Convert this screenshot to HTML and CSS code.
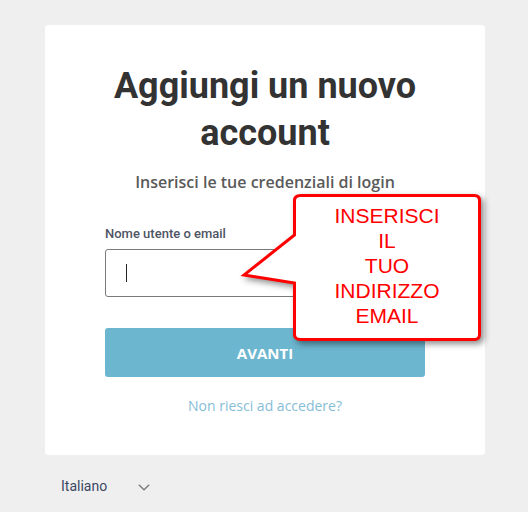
FILE: index.html
```html
<!DOCTYPE html>
<html lang="it">
<head>
<meta charset="utf-8">
<link rel="stylesheet" href="styles.css">
</head>
<body>
<div class="page">
  <main class="card">
    <h1 class="title">Aggiungi un nuovo account</h1>
    <p class="subtitle">Inserisci le tue credenziali di login</p>
    <form class="form">
      <label class="label">Nome utente o email</label>
      <div class="input"><span class="caret"></span></div>
      <button type="button" class="btn">AVANTI</button>
      <a class="link">Non riesci ad accedere?</a>
    </form>
  </main>
  <div class="lang">
    <span class="lang-name">Italiano</span>
    <svg class="chev" width="12" height="7" viewBox="0 0 12 7"><path d="M0.8 0.8 L6 5.8 L11.2 0.8" fill="none" stroke="#7a7a7a" stroke-width="1.3"/></svg>
  </div>
  <div class="callout">
    <svg class="callout-shape" width="252" height="160" viewBox="238 190 252 160">
      <path d="M300.5 195.5 H474.5 Q479.5 195.5 479.5 200.5 V334.5 Q479.5 339.5 474.5 339.5 H300.5 Q294.5 339.5 294.5 334.5 V283 L244 275 L294.5 235 V200.5 Q294.5 195.5 300.5 195.5 Z" fill="#fff" stroke="#ff0000" stroke-width="3" stroke-linejoin="miter"/>
    </svg>
    <div class="callout-text">INSERISCI<br>IL<br>TUO<br>INDIRIZZO<br>EMAIL</div>
  </div>
</div>
</body>
</html>
```
FILE: styles.css
```css
html, body {
  margin: 0;
  padding: 0;
  background: #efefef;
}
.page {
  position: relative;
  width: 528px;
  height: 512px;
  padding: 25px 0 0 45px;
  box-sizing: border-box;
}
.card {
  width: 440px;
  height: 430px;
  box-sizing: border-box;
  background: #fff;
  border-radius: 3px;
  padding: 38px 60px 0;
  display: flex;
  flex-direction: column;
  align-items: center;
}
.title {
  margin: 0;
  font-family: Roboto, "Liberation Sans", sans-serif;
  font-weight: 700;
  font-size: 36px;
  line-height: 47px;
  color: #333333;
  text-align: center;
}
.subtitle {
  margin: 14px 0 0;
  font-family: "Open Sans", "Liberation Sans", sans-serif;
  font-weight: 600;
  font-size: 16px;
  line-height: 22px;
  color: #5a5a5a;
  text-align: center;
}
.form {
  width: 320px;
  margin-top: 33px;
  display: flex;
  flex-direction: column;
}
.label {
  font-family: Roboto, "Liberation Sans", sans-serif;
  font-weight: 500;
  font-size: 13px;
  line-height: 16px;
  color: #4e5564;
}
.input {
  margin-top: 7px;
  height: 48px;
  box-sizing: border-box;
  border: 1px solid #7a7a7a;
  border-radius: 3px;
  display: flex;
  align-items: center;
  padding-left: 20px;
}
.caret {
  width: 1px;
  height: 18px;
  background: #222;
}
.btn {
  margin-top: 31px;
  height: 49px;
  border: none;
  border-radius: 3px;
  background: #6cb6cf;
  color: #fff;
  font-family: "Open Sans", "Liberation Sans", sans-serif;
  font-weight: 700;
  font-size: 15px;
  padding: 0;
}
.link {
  margin-top: 19px;
  font-family: "Open Sans", "Liberation Sans", sans-serif;
  font-size: 14px;
  line-height: 20px;
  color: #86bdd6;
  text-align: center;
}
.lang {
  margin: 23px 0 0 16px;
  display: flex;
  align-items: center;
  height: 16px;
}
.lang-name {
  font-family: Roboto, "Liberation Sans", sans-serif;
  font-size: 14px;
  line-height: 16px;
  color: #3b4864;
}
.chev {
  margin-left: 31px;
  margin-top: 3px;
}
.callout {
  position: absolute;
  left: 238px;
  top: 190px;
  width: 252px;
  height: 160px;
}
.callout-shape {
  display: block;
  filter: drop-shadow(3px 3px 3px rgba(0, 0, 0, 0.45));
}
.callout-text {
  position: absolute;
  left: 56px;
  top: 13px;
  width: 186px;
  text-align: center;
  font-family: "Liberation Sans", Arial, sans-serif;
  font-size: 21px;
  line-height: 25px;
  color: #ff0000;
}
```
